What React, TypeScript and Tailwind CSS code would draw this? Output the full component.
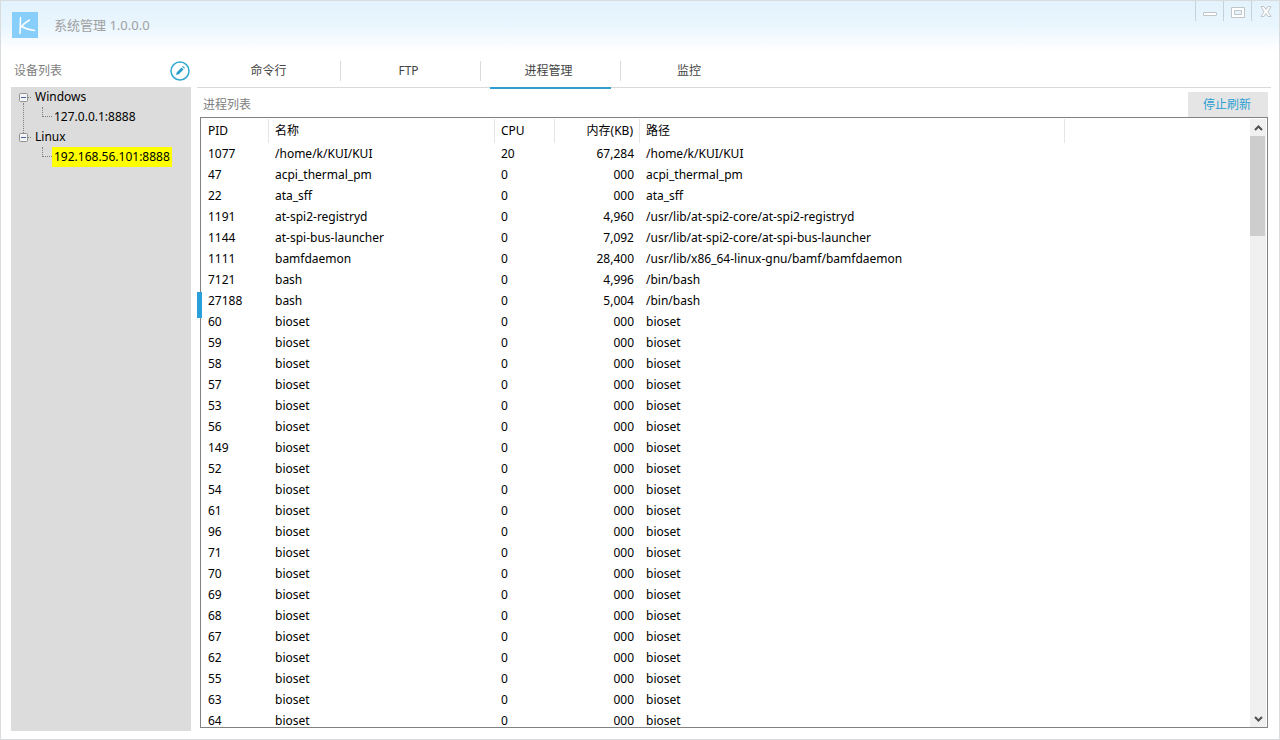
import React, { useState } from "react";
import { clsx } from "clsx";

const tabs = ["命令行", "FTP", "进程管理", "监控"];

const processes = [
  { pid: 1077, name: "/home/k/KUI/KUI", cpu: 20, memory: "67,284", path: "/home/k/KUI/KUI" },
  { pid: 47, name: "acpi_thermal_pm", cpu: 0, memory: "000", path: "acpi_thermal_pm" },
  { pid: 22, name: "ata_sff", cpu: 0, memory: "000", path: "ata_sff" },
  { pid: 1191, name: "at-spi2-registryd", cpu: 0, memory: "4,960", path: "/usr/lib/at-spi2-core/at-spi2-registryd" },
  { pid: 1144, name: "at-spi-bus-launcher", cpu: 0, memory: "7,092", path: "/usr/lib/at-spi2-core/at-spi-bus-launcher" },
  { pid: 1111, name: "bamfdaemon", cpu: 0, memory: "28,400", path: "/usr/lib/x86_64-linux-gnu/bamf/bamfdaemon" },
  { pid: 7121, name: "bash", cpu: 0, memory: "4,996", path: "/bin/bash" },
  { pid: 27188, name: "bash", cpu: 0, memory: "5,004", path: "/bin/bash" },
  ...[60, 59, 58, 57, 53, 56, 149, 52, 54, 61, 96, 71, 70, 69, 68, 67, 62, 55, 63, 64].map((pid) => ({
    pid,
    name: "bioset",
    cpu: 0,
    memory: "000",
    path: "bioset",
  })),
];

const devices = [
  { group: "Windows", hosts: ["127.0.0.1:8888"] },
  { group: "Linux", hosts: ["192.168.56.101:8888"] },
];

const Logo = () => (
  <svg viewBox="0 0 26 26" className="h-[26px] w-[26px]">
    <rect width="26" height="26" fill="#87cefa" />
    <path
      d="M8.500 5.500 8 21.500M17.500 8C14 10 11.500 12 9 15M9.500 14.500C13 16.500 17 18 22.500 18.500"
      fill="none"
      stroke="#fff"
      strokeWidth="1.500"
      strokeLinecap="round"
    />
  </svg>
);

const TitleBar = () => (
  <header className="flex h-[50px] shrink-0 justify-between bg-linear-to-b from-[#e3f2fc] via-[#eaf6fe] to-white">
    <div className="flex items-center gap-4 pb-0.5 pl-[11px] text-[#a0a0a0]">
      <Logo />
      <h1 className="pt-0.5 text-[13px]">系统管理 1.0.0.0</h1>
    </div>
    <div className="flex h-5">
      <button aria-label="Minimize" className="flex w-7 justify-center border-l border-[#c6d2d9] pt-1">
        <svg viewBox="0 0 14 14" className="h-3.5 w-3.5" fill="#fff" stroke="#bfc5c8">
          <rect x=".5" y="7.500" width="13" height="3" rx="0.500" />
        </svg>
      </button>
      <button aria-label="Maximize" className="flex w-7 justify-center border-l border-[#c6d2d9] pt-1">
        <svg viewBox="0 0 14 14" className="h-3.5 w-3.5" fill="#fff" stroke="#bfc5c8">
          <path d="M.5 2.500h13v10H.5zM3.500 5.500v4h7v-4z" fillRule="evenodd" />
        </svg>
      </button>
      <button aria-label="Close" className="flex w-7 justify-center border-l border-[#c6d2d9] pt-1">
        <svg viewBox="0 0 14 14" className="h-3.5 w-3.5" fill="#fff" stroke="#bfc5c8">
          <path d="M2 1.500h3l2 3 2-3h3L9 6.800l3 4.700H9l-2-3-2 3H2l3-4.700z" />
        </svg>
      </button>
    </div>
  </header>
);

const DeviceTree = () => {
  const [closed, setClosed] = useState<string[]>([]);
  const [selected, setSelected] = useState("192.168.56.101:8888");

  const toggle = (group: string) => {
    setClosed(closed.includes(group) ? closed.filter((g) => g !== group) : [...closed, group]);
  };

  return (
    <ul className="flex-1 bg-[#dcdcdc] text-xs leading-5 text-black">
      {devices.map(({ group, hosts }, i) => (
        <li key={group} className="relative">
          {i < devices.length - 1 && (
            <span className="absolute top-4 -bottom-1.5 left-3 border-l border-dotted border-[#808080]" />
          )}
          <button onClick={() => toggle(group)} className="flex h-5 items-center pl-2">
            <svg viewBox="0 0 9 9" className="h-[9px] w-[9px]">
              <rect x=".5" y=".5" width="8" height="8" rx="1" fill="#f4f4f4" stroke="#919191" />
              <path d={closed.includes(group) ? "M2 4.500h5M4.500 2v5" : "M2 4.500h5"} stroke="#4b63a7" />
            </svg>
            <span className="mr-1 w-[3px] border-t border-dotted border-[#808080]" />
            {group}
          </button>
          {!closed.includes(group) &&
            hosts.map((host) => (
              <div key={host} className="flex h-5 pl-[31px]">
                <span className="h-2.5 w-2.5 border-b border-l border-dotted border-[#808080]" />
                <button
                  onClick={() => setSelected(host)}
                  className={clsx("px-0.5", selected === host && "bg-[#ffff00]")}
                >
                  {host}
                </button>
              </div>
            ))}
        </li>
      ))}
    </ul>
  );
};

const Sidebar = () => (
  <aside className="flex w-[180px] shrink-0 flex-col">
    <div className="flex h-9 shrink-0 items-center justify-between pt-[3px] pl-[3px] text-xs text-[#808080]">
      <h2>设备列表</h2>
      <button aria-label="编辑">
        <svg viewBox="0 0 22 22" className="h-[22px] w-[22px]">
          <circle cx="11" cy="11" r="9" fill="#fff" stroke="#36a9d0" strokeWidth="1.500" />
          <path d="m7 15 .8-2.800 4.700-4.700 2 2-4.700 4.700zM13.200 6.800l.8-.8 2 2-.8.8z" fill="#2c9fc9" />
        </svg>
      </button>
    </div>
    <DeviceTree />
  </aside>
);

const ScrollBar = () => (
  <div className="flex w-4 shrink-0 flex-col bg-[#f0f0f0]">
    <button aria-label="Scroll up" className="flex h-[17px] items-center justify-center">
      <svg viewBox="0 0 9 6" className="h-1.5 w-[9px]">
        <path d="M1 5l3.500-3.500L8 5" fill="none" stroke="#505050" strokeWidth="2" />
      </svg>
    </button>
    <div className="mr-px h-[100px] bg-[#cdcdcd]" />
    <button aria-label="Scroll down" className="mt-auto flex h-[17px] items-center justify-center">
      <svg viewBox="0 0 9 6" className="h-1.5 w-[9px]">
        <path d="M1 1l3.500 3.500L8 1" fill="none" stroke="#505050" strokeWidth="2" />
      </svg>
    </button>
  </div>
);

const ProcessTable = () => (
  <div className="flex min-h-0 flex-1 border border-[#828282] p-px pb-0">
    <div className="min-w-0 flex-1 overflow-hidden">
      <table className="w-full table-fixed border-separate border-spacing-0 text-left text-xs leading-3 whitespace-nowrap text-black">
        <colgroup>
          <col className="w-[67px]" />
          <col className="w-[226px]" />
          <col className="w-[60px]" />
          <col className="w-[85px]" />
          <col className="w-[425px]" />
          <col />
        </colgroup>
        <thead>
          <tr className="h-6 *:border-r *:border-[#e5e5e5] *:px-1.5 *:font-normal">
            <th>PID</th>
            <th>名称</th>
            <th>CPU</th>
            <th className="text-right">内存(KB)</th>
            <th>路径</th>
            <td className="border-r-0!" />
          </tr>
        </thead>
        <tbody>
          {processes.map((p) => (
            <tr key={p.pid} className="h-[21px] *:px-1.5">
              <td>{p.pid}</td>
              <td>{p.name}</td>
              <td>{p.cpu}</td>
              <td className="text-right">{p.memory}</td>
              <td>{p.path}</td>
              <td />
            </tr>
          ))}
        </tbody>
      </table>
    </div>
    <ScrollBar />
  </div>
);

const App = () => {
  const [tab, setTab] = useState("进程管理");
  const [refreshing, setRefreshing] = useState(true);

  return (
    <div className="flex h-screen flex-col border border-[#d9dcdd] bg-white font-['Noto_Sans','Noto_Sans_CJK_SC',sans-serif]">
      <TitleBar />
      <div className="flex min-h-0 flex-1 gap-1.5 pr-2 pb-2 pl-2.5">
        <Sidebar />
        <main className="flex min-w-0 flex-1 flex-col">
          <nav className="flex h-[37px] shrink-0 items-end border-b border-[#d9d9d9] pb-1.5 pl-1 text-xs text-[#444444]">
            {tabs.map((t, i) => (
              <div
                key={t}
                className={clsx(
                  "relative flex h-5 w-[140px]",
                  i < tabs.length - 1 && "border-r border-[#d9d9d9]"
                )}
              >
                <button onClick={() => setTab(t)} className="flex-1 pr-1">
                  {t}
                </button>
                {tab === t && <span className="absolute inset-x-[9px] -bottom-2 h-0.5 bg-[#2f9fd0]" />}
              </div>
            ))}
          </nav>
          <section className="relative flex min-h-0 flex-1 flex-col pt-1 pr-[3px] pb-[3px] pl-[3px]">
            <div className="flex h-[25px] shrink-0 items-center justify-between pl-[3px] text-xs text-[#808080]">
              <h2>进程列表</h2>
              <button
                onClick={() => setRefreshing(!refreshing)}
                className="h-full w-20 bg-[#e5e5e5] pr-0.5 text-[#2b9fd2]"
              >
                {refreshing ? "停止刷新" : "开始刷新"}
              </button>
            </div>
            <ProcessTable />
            {/* splitter grip */}
            <span className="absolute top-[204px] left-0 h-[26px] w-[5px] bg-[#29a0da]" />
          </section>
        </main>
      </div>
    </div>
  );
};

export default App;
